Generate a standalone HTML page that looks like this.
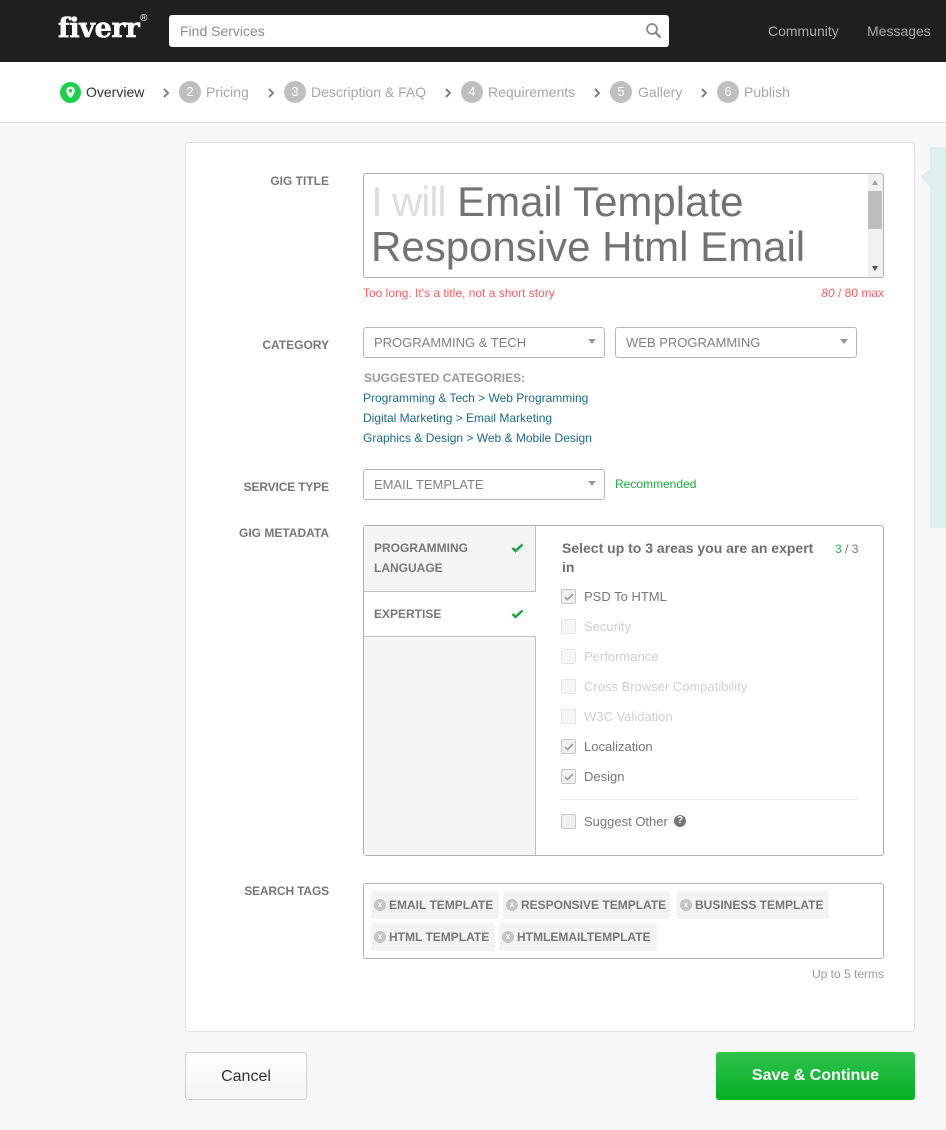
<!DOCTYPE html>
<html><head><meta charset="utf-8"><style>
html,body{margin:0;padding:0}
body{width:946px;height:1130px;position:relative;overflow:hidden;background:#f7f7f7;font-family:"Liberation Sans",Arial,sans-serif;color:#777}
.a,.t{position:absolute;box-sizing:border-box}
.t{white-space:nowrap}
.lab{font-size:12px;font-weight:bold;color:#777;text-align:right;right:617px;line-height:16px}
.step{font-size:14px;color:#a6a6a6;line-height:18px;top:83px}
.num{position:absolute;top:81px;width:22px;height:22px;border-radius:50%;background:#bfbfbf;color:#fff;font-size:13px;line-height:22px;text-align:center}
.sel{position:absolute;box-sizing:border-box;height:31px;border:1px solid #b5b5b5;border-radius:3px;background:#fff;font-size:13px;color:#808080;line-height:30px;padding-left:10px}
.sel:after{content:"";position:absolute;right:8px;top:11px;border-left:4px solid transparent;border-right:4px solid transparent;border-top:5px solid #999}
.link{font-size:12px;line-height:16px;color:#1a6a8a;left:363px}
.cb{position:absolute;box-sizing:border-box;left:561px;width:15px;height:15px;border:1px solid #c5c5c5;border-radius:2px;background:#f0f0f0}
.cb.d{border-color:#e6e6e6;background:#f6f6f6}
.cl{position:absolute;left:584px;font-size:13px;line-height:16px;color:#777;white-space:nowrap}
.cl.d{color:#cfcfcf}
.tag{position:absolute;height:28px;background:#f3f3f3;border-radius:2px;font-size:12px;font-weight:bold;color:#777;line-height:28px;white-space:nowrap}
.tag i{position:absolute;left:3px;top:8px;width:12px;height:12px;border-radius:50%;background:#c4c4c4;color:#fff;font:bold 8px/11px "Liberation Sans",sans-serif;text-align:center}
.tag span{position:absolute;left:18px}
</style></head><body>
<div class="a" style="left:0;top:0;width:946px;height:62px;background:#1f1f1f"></div>
<div class="t" style="left:58px;top:14px;font:bold 27px/30px 'DejaVu Serif',serif;color:#fff;letter-spacing:-.3px;-webkit-text-stroke:.6px #fff">fiverr</div>
<div class="t" style="left:140px;top:14px;font-size:10px;line-height:10px;color:#fff">®</div>
<div class="a" style="left:169px;top:15px;width:500px;height:32px;background:#fff;border-radius:3px"></div>
<div class="t" style="left:180px;top:22px;font-size:14px;line-height:18px;color:#8c8c8c">Find Services</div>
<svg class="a" style="left:645px;top:22px" width="18" height="18" viewBox="0 0 18 18" fill="none" stroke="#8a8a8a"><circle cx="7" cy="7" r="5" stroke-width="1.8"/><path d="M10.8 10.8L15.5 15.500" stroke-width="2.4"/></svg>
<div class="t" style="left:768px;top:22px;font-size:14px;line-height:18px;color:#a8a8a8">Community</div>
<div class="t" style="left:867px;top:22px;font-size:14px;line-height:18px;color:#a8a8a8">Messages</div>

<div class="a" style="left:0;top:62px;width:946px;height:61px;background:#fff;border-bottom:1px solid #e2e2e2"></div>
<svg class="a" style="left:60px;top:82px" width="21" height="21" viewBox="0 0 21 21"><circle cx="10.5" cy="10.5" r="10.5" fill="#1bd14b"/><path d="M10.5 4.5a4.3 4.3 0 0 0-4.3 4.3c0 3 4.3 7.5 4.3 7.5s4.3-4.500 4.300-7.500a4.300 4.300 0 0 0-4.300-4.300zm0 6a1.800 1.800 0 1 1 0-3.600 1.800 1.800 0 0 1 0 3.600z" fill="#fff"/></svg>
<div class="t step" style="left:86px;color:#333">Overview</div>
<div class="num" style="left:179px">2</div><div class="t step" style="left:206px">Pricing</div>
<div class="num" style="left:284px">3</div><div class="t step" style="left:311px">Description &amp; FAQ</div>
<div class="num" style="left:461px">4</div><div class="t step" style="left:488px">Requirements</div>
<div class="num" style="left:610px">5</div><div class="t step" style="left:638px">Gallery</div>
<div class="num" style="left:717px">6</div><div class="t step" style="left:744px">Publish</div>
<svg class="a" style="left:0;top:0" width="946" height="110" fill="none" stroke="#808080" stroke-width="2"><path d="M164 89l4 4-4 4M269 89l4 4-4 4M446 89l4 4-4 4M595 89l4 4-4 4M702 89l4 4-4 4"/></svg>

<div class="a" style="left:930px;top:147px;width:16px;height:381px;background:#dfefee"></div>
<svg class="a" style="left:921px;top:168px" width="9" height="20"><path d="M9 0L0 9l9 10z" fill="#dfefee"/></svg>

<div class="a" style="left:185px;top:142px;width:730px;height:890px;background:#fff;border:1px solid #e0e0e0;border-radius:3px"></div>

<div class="t lab" style="top:173px">GIG TITLE</div>
<div class="a" style="left:363px;top:173px;width:521px;height:105px;border:1px solid #b0b0b0;border-radius:3px;background:#fff;overflow:hidden">
 <div class="a" style="left:504px;top:0;width:15px;height:103px;background:#f1f1f1"></div>
 <div class="a" style="left:504px;top:17px;width:14px;height:38px;background:#bcbcbc"></div>
 <div class="a" style="left:508px;top:6px;border-left:3.500px solid transparent;border-right:3.500px solid transparent;border-bottom:5px solid #a3a3a3"></div>
 <div class="a" style="left:508px;top:92px;border-left:3.500px solid transparent;border-right:3.500px solid transparent;border-top:5px solid #505050"></div>
</div>
<div class="t" style="left:371px;top:179px;font-size:42px;line-height:45px;color:#737373"><span style="color:#dedede;letter-spacing:-1.2px">I will</span> Email Template<br>Responsive Html Email</div>
<div class="t" style="left:363px;top:285px;font-size:12px;line-height:16px;color:#ff5a5f">Too long. It's a title, not a short story</div>
<div class="t" style="right:62px;top:285px;font-size:12px;line-height:16px;color:#ff5a5f"><em>80</em> / 80 max</div>

<div class="t lab" style="top:337px">CATEGORY</div>
<div class="sel" style="left:363px;top:327px;width:242px">PROGRAMMING &amp; TECH</div>
<div class="sel" style="left:615px;top:327px;width:242px">WEB PROGRAMMING</div>
<div class="t" style="left:364px;top:370px;font-size:12px;font-weight:bold;line-height:16px;color:#999">SUGGESTED CATEGORIES:</div>
<div class="t link" style="top:390px">Programming &amp; Tech &gt; Web Programming</div>
<div class="t link" style="top:410px">Digital Marketing &gt; Email Marketing</div>
<div class="t link" style="top:430px">Graphics &amp; Design &gt; Web &amp; Mobile Design</div>

<div class="t lab" style="top:479px;letter-spacing:-.15px">SERVICE TYPE</div>
<div class="sel" style="left:363px;top:469px;width:242px">EMAIL TEMPLATE</div>
<div class="t" style="left:615px;top:476px;font-size:12px;line-height:16px;color:#17b03b">Recommended</div>

<div class="t lab" style="top:525px">GIG METADATA</div>
<div class="a" style="left:363px;top:525px;width:521px;height:331px;border:1px solid #b0b0b0;border-radius:3px;background:#fff"></div>
<div class="a" style="left:364px;top:526px;width:172px;height:329px;background:#f5f5f5;border-right:1px solid #c0c0c0"></div>
<div class="a" style="left:364px;top:591px;width:172px;height:46px;background:#fff;border-top:1px solid #c0c0c0;border-bottom:1px solid #c0c0c0"></div>
<div class="t" style="left:374px;top:538px;font-size:12px;font-weight:bold;line-height:20px;color:#777">PROGRAMMING<br>LANGUAGE</div>
<div class="t" style="left:374px;top:604px;font-size:12px;font-weight:bold;line-height:20px;color:#777">EXPERTISE</div>
<svg class="a" style="left:511px;top:543px" width="13" height="10" fill="none" stroke="#13a538" stroke-width="2.400"><path d="M1.500 5l3 3 7-6.500"/></svg>
<svg class="a" style="left:511px;top:609px" width="13" height="10" fill="none" stroke="#13a538" stroke-width="2.400"><path d="M1.500 5l3 3 7-6.500"/></svg>

<div class="t" style="left:562px;top:539px;width:260px;white-space:normal;font-size:14px;font-weight:bold;line-height:19px;color:#6f6f6f">Select up to 3 areas you are an expert in</div>
<div class="t" style="left:835px;top:541px;font-size:12px;line-height:16px;color:#777"><span style="color:#1db954">3</span> / 3</div>

<div class="cb" style="top:589px"><svg class="a" style="left:2px;top:3px" width="10" height="8" fill="none" stroke="#a0a0a0" stroke-width="1.800"><path d="M1 4l2.500 2.500L9 1"/></svg></div><div class="cl" style="top:589px">PSD To HTML</div>
<div class="cb d" style="top:619px"></div><div class="cl d" style="top:619px">Security</div>
<div class="cb d" style="top:649px"></div><div class="cl d" style="top:649px">Performance</div>
<div class="cb d" style="top:679px"></div><div class="cl d" style="top:679px">Cross Browser Compatibility</div>
<div class="cb d" style="top:709px"></div><div class="cl d" style="top:709px">W3C Validation</div>
<div class="cb" style="top:739px"><svg class="a" style="left:2px;top:3px" width="10" height="8" fill="none" stroke="#a0a0a0" stroke-width="1.800"><path d="M1 4l2.500 2.500L9 1"/></svg></div><div class="cl" style="top:739px">Localization</div>
<div class="cb" style="top:769px"><svg class="a" style="left:2px;top:3px" width="10" height="8" fill="none" stroke="#a0a0a0" stroke-width="1.800"><path d="M1 4l2.500 2.500L9 1"/></svg></div><div class="cl" style="top:769px">Design</div>
<div class="a" style="left:561px;top:799px;width:297px;height:1px;background:#ececec"></div>
<div class="cb" style="top:814px"></div><div class="cl" style="top:814px">Suggest Other</div>
<div class="a" style="left:674px;top:815px;width:12px;height:12px;border-radius:50%;background:#777;color:#fff;font:bold 10px/12px 'Liberation Sans',sans-serif;text-align:center">?</div>

<div class="t lab" style="top:883px;letter-spacing:-.15px">SEARCH TAGS</div>
<div class="a" style="left:363px;top:883px;width:521px;height:76px;border:1px solid #b0b0b0;border-radius:3px;background:#fff"></div>
<div class="tag" style="left:371px;top:891px;width:128px"><i>x</i><span>EMAIL TEMPLATE</span></div>
<div class="tag" style="left:503px;top:891px;width:167px"><i>x</i><span>RESPONSIVE TEMPLATE</span></div>
<div class="tag" style="left:677px;top:891px;width:152px"><i>x</i><span>BUSINESS TEMPLATE</span></div>
<div class="tag" style="left:371px;top:923px;width:124px"><i>x</i><span>HTML TEMPLATE</span></div>
<div class="tag" style="left:499px;top:923px;width:158px"><i>x</i><span>HTMLEMAILTEMPLATE</span></div>
<div class="t" style="right:62px;top:966px;font-size:12px;line-height:16px;color:#9a9a9a">Up to 5 terms</div>

<div class="a" style="left:185px;top:1052px;width:122px;height:48px;border:1px solid #cfcfcf;border-radius:3px;background:linear-gradient(#fff,#f5f5f5);font-size:16px;line-height:47px;text-align:center;color:#333">Cancel</div>
<div class="a" style="left:716px;top:1052px;width:199px;height:48px;border-radius:3px;background:linear-gradient(#30c24e,#03b023);font-size:16px;font-weight:bold;line-height:48px;text-align:center;color:#fff">Save &amp; Continue</div>
</body></html>
